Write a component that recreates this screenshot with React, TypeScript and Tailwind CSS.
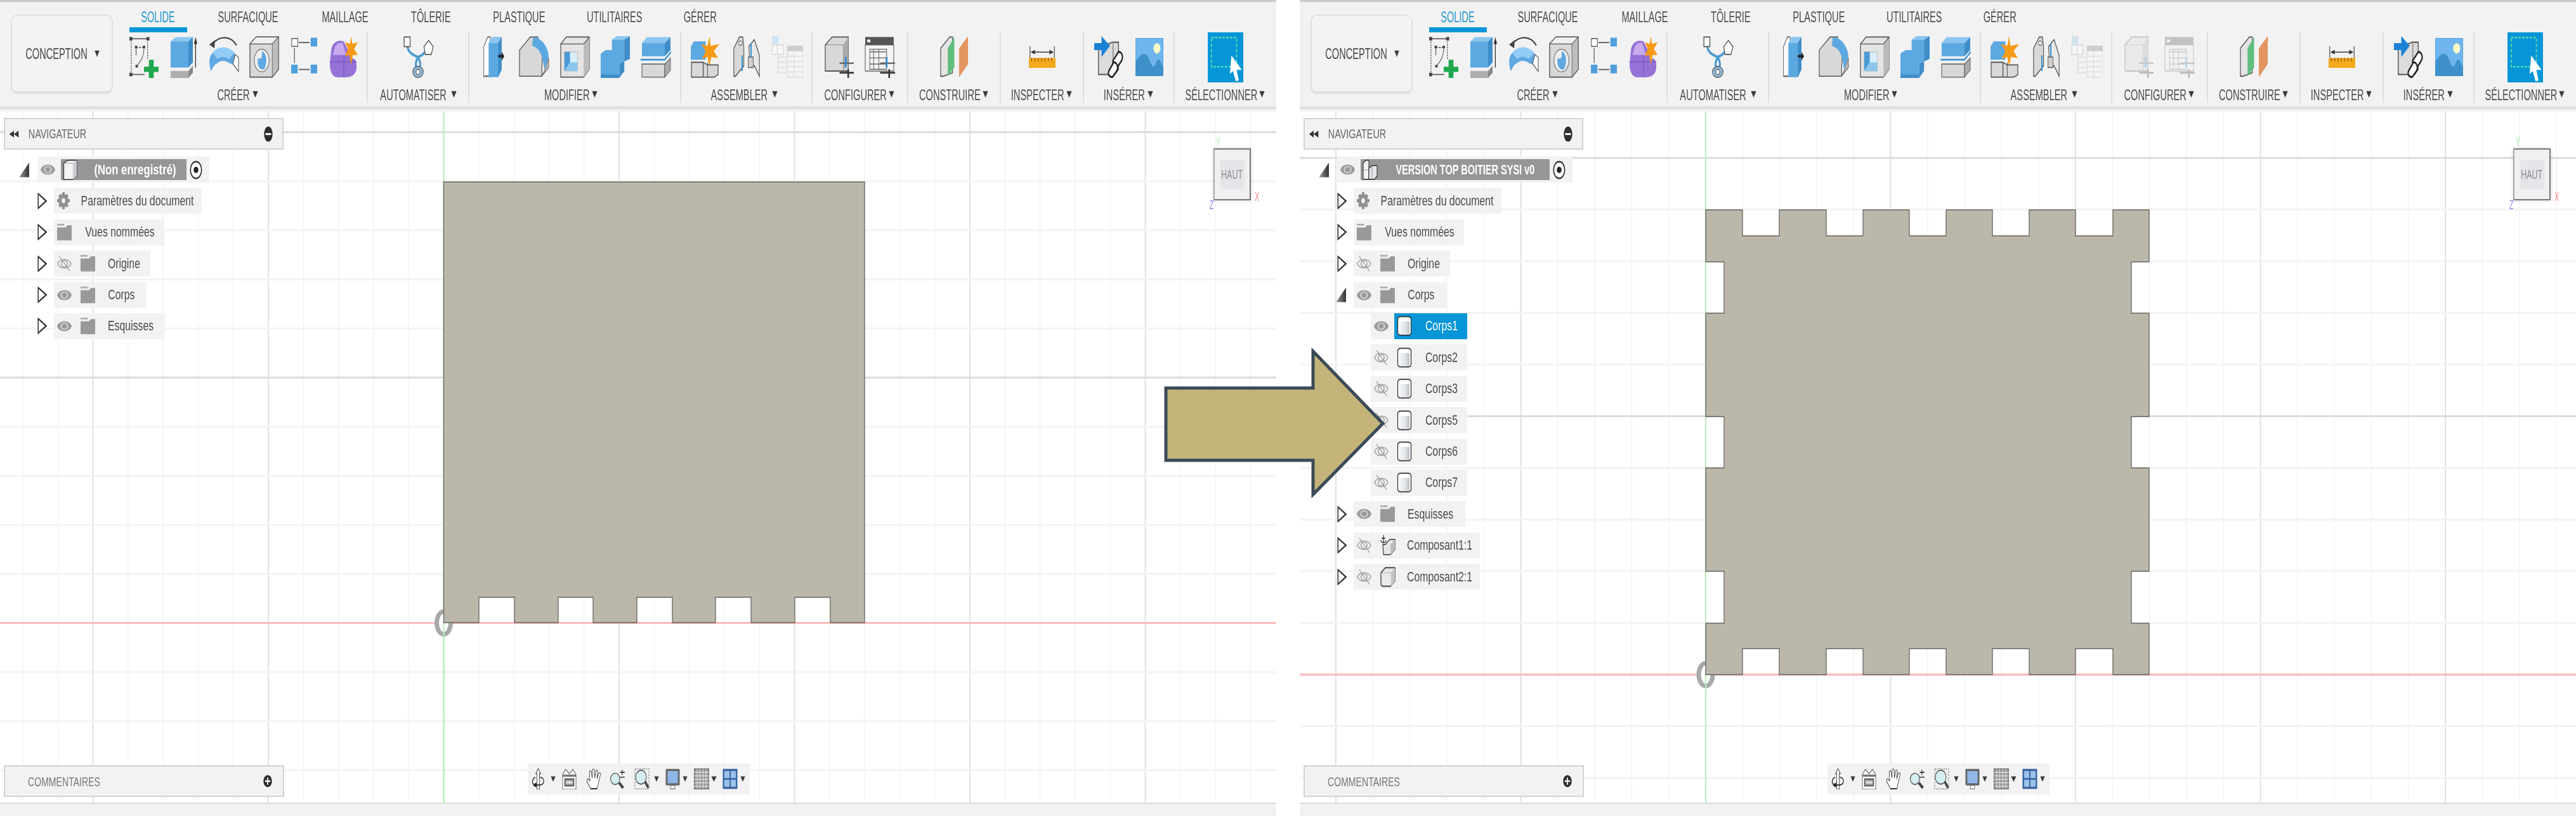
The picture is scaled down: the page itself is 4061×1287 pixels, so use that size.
import React from "react";

type C = { c: string; children?: React.ReactNode };
const I = ({ c, children }: C) => (
  <svg viewBox="0 0 48 48" preserveAspectRatio="none" className={`block shrink-0 ${c}`}>{children}</svg>
);
const Fit = ({ w, s, children }: { w: string; s: string; children: React.ReactNode }) => (
  <span className={`flex justify-center ${w}`}>
    <span className={`block shrink-0 whitespace-nowrap ${s}`}>{children}</span>
  </span>
);
const Tri = ({ c }: { c: string }) => (
  <I c={c}>
    <path d="M2 6H46L24 44Z" fill="#3a3a3a" />
  </I>
);

const O = "#555";
const Sketch = () => (
  <I c="w-[46px] h-[66px]">
    <g fill="none" stroke={O} strokeWidth="1.2">
      <path d="M3 3H30" />
      <path d="M3 3V44" strokeDasharray="2 1" />
      <path d="M3 44H25" />
      <path d="M30 3V26" strokeDasharray="2 1" />
      <path d="M11 13H24" strokeDasharray="3 2" />
      <path d="M11 14V22" />
      <path d="M24 14C24 24 18 30 12 34" strokeWidth="1" />
    </g>
    <g fill="#444">
      <rect x="0" y="1" width="5" height="4" />
      <rect x="28" y="1" width="5" height="4" />
      <rect x="0" y="42" width="5" height="4" />
      <rect x="9" y="11" width="4" height="3" />
      <rect x="22" y="11" width="4" height="3" />
      <rect x="10" y="33" width="4" height="3" />
    </g>
    <path d="M32 27H40V35H48V41H40V48H32V41H24V35H32Z" fill="#1fa84e" />
  </I>
);
const Extrude = () => (
  <I c="w-[42px] h-[66px]">
    <path d="M0 6L9 1H40L32 6Z" fill="#8cc6f0" />
    <path d="M0 6H32V36H0Z" fill="#5ca9e1" />
    <path d="M32 6L40 1V30L32 36Z" fill="#3f8dc8" />
    <path d="M0 38H32L40 32V34L32 40H0Z" fill="#eee" />
    <path d="M0 40H32V48H0Z" fill="#adadad" />
    <path d="M32 40L40 34V42L32 48Z" fill="#888" />
    <path d="M45 6V36" stroke="#333" strokeWidth="1.5" />
    <path d="M45 1L48 9H42Z" fill="#333" />
  </I>
);
const Revolve = () => (
  <I c="w-[48px] h-[58px]">
    <path d="M6 10C18 -1 34 -1 44 12" fill="none" stroke="#444" strokeWidth="2" />
    <path d="M1 11L10 5L9 16Z" fill="#444" />
    <path d="M2 28C8 12 36 12 42 24L46 28V46C40 38 38 36 34 36C24 30 18 32 12 36C8 38 6 42 4 46C2 42 0 34 2 28Z" fill="#5fa8e2" />
    <path d="M6 22C14 12 32 12 40 22L32 30C26 26 18 26 14 30Z" fill="#93cdf7" />
    <path d="M42 24L47 28V46L38 36Z" fill="#fff" stroke="#555" strokeWidth="1" />
  </I>
);
const Hole = () => (
  <I c="w-[47px] h-[66px]">
    <path d="M1 9L11 1H47V38L37 47H1Z" fill="#d8d8d8" stroke={O} strokeWidth="1.4" />
    <path d="M1 9L11 1H47L37 9Z" fill="#efefef" stroke={O} strokeWidth=".8" />
    <path d="M37 9V47L47 38V1Z" fill="#bdbdbd" stroke={O} strokeWidth=".8" />
    <ellipse cx="20" cy="28" rx="12" ry="13" fill="#eee" stroke="#666" strokeWidth="1" />
    <path d="M20 17C28 19 30 30 24 38C16 40 12 32 14 25C17 27 22 26 20 17Z" fill="#5fa8e2" />
  </I>
);
const Pattern = () => (
  <I c="w-[41px] h-[60px]">
    <rect x="1" y="3" width="11" height="10" fill="#fff" stroke="#555" strokeWidth="1.2" />
    <rect x="36" y="2" width="12" height="11" fill="#4f9fdc" />
    <rect x="0" y="36" width="12" height="11" fill="#4f9fdc" />
    <rect x="36" y="36" width="12" height="11" fill="#4f9fdc" />
    <path d="M14 8H34M6 15V34M14 42H34" stroke="#555" strokeWidth="1.4" fill="none" />
  </I>
);
const Form = () => (
  <I c="w-[46px] h-[65px]">
    <path d="M3 18C4 7 14 4 24 6L38 26C44 26 45 30 45 36C45 44 38 48 26 48H14C6 48 1 42 1 32Z" fill="#9472d6" />
    <path d="M8 16C10 9 16 7 22 8L28 22H6Z" fill="#c7a9ef" />
    <path d="M1 30H45M24 22V48" stroke="#7453b8" strokeWidth="1" />
    <path d="M36 0L38 9L47 7L41 15L47 22L39 22L36 33L33 22L26 23L31 15L26 7L34 9Z" fill="#f79a14" />
  </I>
);
const Automate = () => (
  <I c="w-[50px] h-[66px]">
    <path d="M8 12C10 20 18 22 24 24C30 22 34 20 38 14M24 24C20 30 20 34 22 36M24 24C28 30 28 34 26 36" fill="none" stroke="#4a9bd3" strokeWidth="3" />
    <rect x="3" y="1" width="9" height="11" fill="#fff" stroke="#555" strokeWidth="1.3" />
    <path d="M40 5L47 12L44 21H35L33 12Z" fill="#fff" stroke="#555" strokeWidth="1.2" />
    <ellipse cx="24" cy="41" rx="8" ry="6.5" fill="#8db8d6" stroke="#555" strokeWidth="1" />
    <ellipse cx="24" cy="41" rx="3" ry="3" fill="#fff" stroke="#555" strokeWidth="1" />
  </I>
);
const Press = () => (
  <I c="w-[33px] h-[66px]">
    <path d="M1 46V12L10 1H16V46Z" fill="#fff" stroke={O} strokeWidth="1.3" />
    <path d="M12 8L20 1H42V38L34 47H12Z" fill="#5ca9e1" />
    <path d="M34 8H12L20 1H42Z" fill="#8cc6f0" />
    <path d="M34 8V47L42 38V1Z" fill="#3f8dc8" />
    <path d="M34 23H44" stroke="#222" strokeWidth="3" />
    <path d="M42 18L48 23L42 28Z" fill="#222" />
  </I>
);
const Fillet = () => (
  <I c="w-[48px] h-[66px]">
    <path d="M1 46V16L18 1H30L30 9H36C39 16 36 30 36 46Z" fill="#d8d8d8" stroke={O} strokeWidth="1.2" />
    <path d="M36 46L47 36V25L40 40Z" fill="#bdbdbd" stroke={O} strokeWidth=".8" />
    <path d="M22 2C36 0 47 14 47 24L40 38C38 24 34 14 21 11Z" fill="#5ca9e1" />
  </I>
);
const Shell = () => (
  <I c="w-[47px] h-[66px]">
    <path d="M1 9L10 1H47V38L38 47H1Z" fill="#e4e4e4" stroke={O} strokeWidth="1.3" />
    <path d="M38 9V47L47 38V1Z" fill="#bbb" />
    <path d="M1 9H38L47 1" fill="none" stroke={O} strokeWidth="1" />
    <path d="M7 18V40H28V18Z" fill="#d8edfb" stroke="#b6b6b6" strokeWidth=".8" />
    <path d="M7 18H16V30L7 40Z" fill="#4b99d6" />
    <path d="M7 40L16 30H28V40Z" fill="#8cc6f0" />
  </I>
);
const Combine = () => (
  <I c="w-[47px] h-[66px]">
    <path d="M18 4L26 0H47L38 4Z" fill="#8cc6f0" />
    <path d="M0 20L8 16H18V4H38V29L30 31V48H0Z" fill="#5ca9e1" />
    <path d="M38 4L47 0V26L38 29Z M30 31L38 29V40L30 48Z" fill="#3f8dc8" />
    <path d="M0 48H30V44H0Z" fill="#3f8dc8" />
  </I>
);
const Split = () => (
  <I c="w-[48px] h-[66px]">
    <path d="M2 8L10 1H47L38 8Z" fill="#8cc6f0" />
    <path d="M2 8H38V23H2Z" fill="#5ca9e1" />
    <path d="M38 8L47 1V16L38 23Z" fill="#3f8dc8" />
    <path d="M0 27L38 27L48 18" fill="none" stroke="#3a93d6" strokeWidth="2" />
    <path d="M2 32H38V47H2Z" fill="#d8d8d8" stroke={O} strokeWidth="1" />
    <path d="M38 32L47 25V39L38 47Z" fill="#aaa" stroke={O} strokeWidth=".8" />
  </I>
);
const Asm = () => (
  <I c="w-[47px] h-[66px]">
    <path d="M0 12L5 6H24V27H0Z" fill="#5ca9e1" />
    <path d="M30 0L32 11L46 9L37 17L44 25L33 24L30 35L27 24L18 26L24 17L17 9L27 11Z" fill="#f79a14" />
    <path d="M1 30H20V47H1Z M20 47V30L27 33H44V44L38 47Z" fill="#d8d8d8" stroke={O} strokeWidth="1.3" />
    <path d="M20 30V47M27 30V47" stroke={O} strokeWidth="1" />
  </I>
);
const Joint = () => (
  <I c="w-[42px] h-[66px]">
    <path d="M1 46V14L11 1H17L19 12V34L4 46Z" fill="#d8d8d8" stroke={O} strokeWidth="1.3" />
    <path d="M28 12L38 4L47 22V46L38 34H30Z" fill="#e8e8e8" stroke={O} strokeWidth="1.3" />
    <path d="M27 24H36V36H27Z" fill="#cfcfcf" stroke={O} strokeWidth="1" />
    <path d="M16 22V40M32 8V24" stroke="#3a93d6" strokeWidth="2.4" />
    <ellipse cx="13" cy="8" rx="3" ry="2.5" fill="#fff" stroke={O} />
  </I>
);
const TableFaded = () => (
  <I c="w-[50px] h-[66px]">
    <g opacity=".9">
      <rect x="1" y="0" width="10" height="9" fill="#cfe1ef" />
      <rect x="1" y="10" width="17" height="11" fill="#f8f8f8" stroke="#ccc" />
      <path d="M9 10V21" stroke="#ccc" />
      <rect x="24" y="11" width="24" height="6" fill="#c8c8c8" />
      <path d="M24 17H48V47H24Z" fill="#f5f5f5" stroke="#d4d4d4" />
      <path d="M24 23H48M24 29H48M24 35H48M24 41H48M34 17V47" stroke="#d8d8d8" />
      <path d="M10 24H22M10 30H22M10 36H22M10 42H22M10 24V44" stroke="#dedede" strokeWidth="1.4" />
    </g>
  </I>
);
const Sliders = () => (
  <g>
    <path d="M24 31H47" stroke="#5a5a5a" strokeWidth="1.6" />
    <path d="M24 42H47" stroke="#333" strokeWidth="2" />
    <path d="M34 24V36" stroke="#2b87d3" strokeWidth="2.6" />
    <path d="M38 38V48" stroke="#333" strokeWidth="2.6" />
  </g>
);
const Cfg1 = () => (
  <I c="w-[47px] h-[66px]">
    <path d="M1 10L12 1H38V40H1Z" fill="#d8d8d8" stroke={O} strokeWidth="1.3" />
    <path d="M1 10H30V40" fill="none" stroke={O} strokeWidth=".5" />
    <path d="M30 10L38 1V30L30 40Z" fill="#aaa" />
    <Sliders />
  </I>
);
const Cfg2 = () => (
  <I c="w-[49px] h-[66px]">
    <rect x="1" y="1" width="44" height="9" fill="#555" />
    <rect x="4" y="4" width="5" height="3" fill="#fff" />
    <rect x="1" y="10" width="44" height="30" fill="#f4f4f4" stroke={O} />
    <path d="M8 18H34M8 25H34M8 32H34M14 15V38M22 15V38M8 15V38H34V15Z" fill="none" stroke="#666" strokeWidth="1" />
    <Sliders />
  </I>
);
const Plane = () => (
  <I c="w-[45px] h-[66px]">
    <path d="M1 46V14L16 1H21V42L5 46Z" fill="#e4e4e4" stroke={O} strokeWidth="1.3" />
    <path d="M13 46V14L24 1V36Z" fill="#5fbe7d" />
    <path d="M32 47V14L47 0V32Z" fill="#e39560" />
  </I>
);
const Inspect = () => (
  <I c="w-[42px] h-[34px]">
    <path d="M2 0V26M46 0V26" stroke="#666" strokeWidth="1.6" />
    <path d="M7 13H41" stroke="#333" strokeWidth="2" />
    <path d="M3 13L11 8V18ZM45 13L37 8V18Z" fill="#333" />
    <rect x="0" y="26" width="48" height="22" fill="#f5a91e" />
    <path d="M5 26V33M11 26V33M17 26V33M23 26V33M29 26V33M35 26V33M41 26V33" stroke="#8b5c05" strokeWidth="1.6" />
  </I>
);
const Insert = () => (
  <I c="w-[46px] h-[66px]">
    <path d="M7 14L30 7H40V38L34 44H7Z" fill="#dcdcdc" stroke={O} strokeWidth="1.5" />
    <path d="M31 7V40" stroke="#9a9a9a" strokeWidth="2" />
    <path d="M0 8H12V0L26 11L12 24V16H0Z" fill="#1c82d6" />
    <g fill="#fff" stroke="#222" strokeWidth="2.2">
      <path d="M31 28L40 18C46 18 48 24 45 28L38 36C33 36 30 33 31 28Z" />
      <path d="M24 40L32 30C38 30 40 36 37 40L30 47C25 47 22 44 24 40Z" />
    </g>
  </I>
);
const Picture = () => (
  <I c="w-[44px] h-[60px]">
    <rect x="0" y="0" width="48" height="48" fill="#6fb6ee" stroke="#4a93cc" strokeWidth="1" />
    <ellipse cx="37" cy="13" rx="6" ry="6.5" fill="#fffbc8" />
    <path d="M0 30C6 24 12 16 20 22C26 28 28 38 32 36C36 32 38 24 42 28L48 38V48H0Z" fill="#3e90c9" />
  </I>
);
const SelectI = () => (
  <I c="w-[56px] h-[79px]">
    <rect width="48" height="48" fill="#0696d7" />
    <rect x="5" y="5" width="34" height="28" fill="none" stroke="#61e0a8" strokeWidth="1.4" strokeDasharray="3 2" />
    <path d="M32 22L46 36L39 36L42 46L38 47L34 37L30 40Z" fill="#fff" />
  </I>
);

const EyeOn = () => (
  <I c="w-[23px] h-[21px]">
    <path d="M0 24C6 0 42 0 48 24C42 48 6 48 0 24Z" fill="#9a9a9a" />
    <ellipse cx="24" cy="24" rx="13" ry="14" fill="#d0d0d0" />
    <ellipse cx="24" cy="24" rx="8" ry="9" fill="#9a9a9a" />
  </I>
);
const EyeOff = () => (
  <I c="w-[23px] h-[24px]">
    <path d="M2 24C10 6 38 6 46 24C38 42 10 42 2 24Z" fill="none" stroke="#a4a4a4" strokeWidth="3.4" />
    <ellipse cx="24" cy="24" rx="10" ry="10" fill="none" stroke="#a4a4a4" strokeWidth="3.4" />
    <path d="M8 1L42 47" stroke="#8f8f8f" strokeWidth="2.5" />
  </I>
);
const Folder = () => (
  <I c="w-[23px] h-[27px]">
    <rect x="0" y="0" width="24" height="5" fill="#b0b0b0" />
    <path d="M0 10H28L34 4H48V48H0Z" fill="#999" />
    <rect x="0" y="46" width="48" height="2" fill="#ddd" />
  </I>
);
const Gear = () => (
  <I c="w-[20px] h-[27px]">
    <path d="M20 0H28L30 8L37 5L43 11L39 18L48 20V28L39 30L43 37L37 43L30 40L28 48H20L18 40L11 43L5 37L9 30L0 28V20L9 18L5 11L11 5L18 8Z" fill="#8f8f8f" />
    <ellipse cx="24" cy="24" rx="7" ry="7" fill="#f2f2f2" />
  </I>
);
const BodyI = () => (
  <I c="w-[24px] h-[32px]">
    <defs>
      <linearGradient id="bd" x1="0" x2="1" y1="0" y2="0">
        <stop offset="0" stopColor="#f7f7f7" />
        <stop offset=".6" stopColor="#dfe3e8" />
        <stop offset="1" stopColor="#b8bec6" />
      </linearGradient>
    </defs>
    <rect x="3" y="2" width="42" height="44" rx="9" ry="6" fill="#fff" stroke="#333" strokeWidth="2.5" />
    <rect x="8" y="13" width="32" height="30" rx="3" fill="url(#bd)" />
  </I>
);
const CompI = () => (
  <I c="w-[24px] h-[32px]">
    <path d="M2 14L16 2H46V34L32 46H6L2 42Z" fill="#e8e8e8" stroke="#333" strokeWidth="2.5" />
    <path d="M34 14V46L46 34V2Z" fill="#c4c4c4" />
    <path d="M2 14H34" fill="none" stroke="#888" strokeWidth="1" />
  </I>
);
const AnchorI = () => (
  <I c="w-[24px] h-[32px]">
    <path d="M8 22H16L30 10H46V34L32 46H10Z" fill="#e6e6e6" stroke="#333" strokeWidth="2.2" />
    <path d="M32 22V46L46 34V10Z" fill="#bdbdbd" />
    <path d="M10 0V18M4 7H16M2 12C3 20 17 20 18 12" fill="none" stroke="#222" strokeWidth="2.2" />
  </I>
);
const RootCube = () => (
  <I c="w-[24px] h-[32px]">
    <path d="M3 8L16 1H44V38L30 47H3Z" fill="#f2f3f5" stroke="#333" strokeWidth="2.4" />
    <path d="M32 8V47L44 38V1Z" fill="#c8ccd2" />
    <path d="M3 8H32" stroke="#666" strokeWidth="1" />
  </I>
);
const RootAsm = () => (
  <I c="w-[24px] h-[32px]">
    <path d="M2 8L10 1H20V46H2Z" fill="#f2f3f5" stroke="#333" strokeWidth="2.2" />
    <path d="M20 20L30 14H46V38L38 46H20Z" fill="#e4e6ea" stroke="#333" strokeWidth="2.2" />
    <path d="M2 24H20M30 14V46" stroke="#555" strokeWidth="1" />
  </I>
);
const Chevron = () => (
  <I c="w-[15px] h-[26px]">
    <path d="M4 3L44 24L4 45Z" fill="#fff" stroke="#333" strokeWidth="5" />
  </I>
);
const Open = () => (
  <I c="w-[17px] h-[24px]">
    <defs>
      <linearGradient id="tr" x1="0" x2="1" y1="0" y2="0">
        <stop offset="0" stopColor="#999" />
        <stop offset="1" stopColor="#333" />
      </linearGradient>
    </defs>
    <path d="M45 1V47H1Z" fill="url(#tr)" />
  </I>
);
const Target = () => (
  <I c="w-[20px] h-[30px]">
    <ellipse cx="24" cy="24" rx="21" ry="21" fill="#fff" stroke="#333" strokeWidth="4" />
    <ellipse cx="24" cy="24" rx="9" ry="8" fill="#222" />
  </I>
);

const Orbit = () => (
  <I c="w-[23px] h-[33px]">
    <path d="M24 0L32 12H28V48H20V12H16Z" fill="#fff" stroke="#222" strokeWidth="1.6" />
    <path d="M14 20C4 24 2 34 10 36M30 20C46 22 46 36 30 38H16" fill="none" stroke="#222" strokeWidth="2.4" />
    <path d="M18 32L6 38L18 44Z" fill="#222" />
  </I>
);
const Camera = () => (
  <I c="w-[23px] h-[33px]">
    <path d="M2 14L12 2L24 12L36 2L46 14V48H2Z" fill="#fff" stroke="#444" strokeWidth="1.6" />
    <path d="M2 14H46V19H2Z" fill="#777" />
    <rect x="9" y="24" width="30" height="16" fill="#999" stroke="#333" strokeWidth="2" />
    <rect x="14" y="29" width="20" height="6" fill="#ddd" />
  </I>
);
const Hand = () => (
  <I c="w-[24px] h-[33px]">
    <path d="M14 46C8 36 0 30 3 25C6 21 10 26 12 30L11 9C11 4 16 4 17 9L19 22L20 4C20 0 26 0 26 4L27 22L31 6C32 2 37 3 36 8L34 24L39 12C41 8 46 10 45 14L38 36C37 40 36 43 35 46Z" fill="#fff" stroke="#333" strokeWidth="1.6" />
    <path d="M14 47H35" stroke="#333" strokeWidth="2" />
  </I>
);
const Zoom = () => (
  <I c="w-[25px] h-[33px]">
    <ellipse cx="17" cy="24" rx="14" ry="13" fill="#d5eef2" stroke="#444" strokeWidth="2" />
    <path d="M26 35L38 47L44 43L32 31Z" fill="#444" />
    <path d="M38 3V15M32 9H46M32 20H46" stroke="#333" strokeWidth="2.4" />
  </I>
);
const FitI = () => (
  <I c="w-[24px] h-[33px]">
    <rect x="2" y="1" width="44" height="46" fill="none" stroke="#555" strokeWidth="1.6" strokeDasharray="4 3" />
    <ellipse cx="21" cy="20" rx="17" ry="16" fill="#d5eef2" stroke="#444" strokeWidth="2" />
    <path d="M31 32L41 46L47 42L36 28Z" fill="#444" />
  </I>
);
const Display = () => (
  <I c="w-[23px] h-[33px]">
    <rect x="1" y="1" width="46" height="38" rx="3" fill="#666" />
    <rect x="7" y="6" width="34" height="28" fill="#8eb7e6" />
    <path d="M17 39H31V47H17Z" fill="#fff" stroke="#555" strokeWidth="1.6" />
  </I>
);
const GridI = () => (
  <I c="w-[24px] h-[33px]">
    <rect x="1" y="1" width="46" height="46" fill="#999" stroke="#555" strokeWidth="1.6" />
    <path d="M10 1V47M19 1V47M29 1V47M38 1V47M1 9H47M1 17H47M1 25H47M1 33H47M1 41H47" stroke="#f2f2f2" strokeWidth="1.6" />
  </I>
);
const Views = () => (
  <I c="w-[24px] h-[33px]">
    <rect x="1" y="1" width="46" height="46" fill="#3a66a3" />
    <rect x="6" y="6" width="16" height="16" fill="#9cc1e8" />
    <rect x="26" y="6" width="16" height="16" fill="#9cc1e8" />
    <rect x="6" y="26" width="16" height="16" fill="#9cc1e8" />
    <rect x="26" y="26" width="16" height="16" fill="#9cc1e8" />
  </I>
);

const Tx = ({ w, children, s = "scale-x-[.72]", c = "text-[#4a4a4a]" }: { w: string; children: React.ReactNode; s?: string; c?: string }) => (
  <span className={`block text-[22px] leading-none ${c}`}>
    <Fit w={w} s={s}>{children}</Fit>
  </span>
);

const tabs = [
  ["SOLIDE", "w-[55px]"],
  ["SURFACIQUE", "w-[95px]"],
  ["MAILLAGE", "w-[76px]"],
  ["TÔLERIE", "w-[61px]"],
  ["PLASTIQUE", "w-[82px]"],
  ["UTILITAIRES", "w-[85px]"],
  ["GÉRER", "w-[51px]"],
];

const Group = ({ w, label, lw, children, lp = "", sep = true }: { w: string; label: string; lw: string; children: React.ReactNode; lp?: string; sep?: boolean }) => (
  <div className={`flex flex-col items-center h-[111px] shrink-0 ${w} ${sep ? "border-r-2 border-[#dedede]" : ""}`}>
    <div className="flex items-center justify-center h-[78px]">{children}</div>
    <div className={`flex items-center gap-[5px] h-[22px] mt-[10px] text-[24px] leading-none text-[#4a4a4a] ${lp}`}>
      <Fit w={lw} s="scale-x-[.61]">{label}</Fit>
      <Tri c="w-[9px] h-[13px] -mt-[3px]" />
    </div>
  </div>
);
const Cell = ({ children, w = "w-[63px]" }: { children: React.ReactNode; w?: string }) => (
  <div className={`flex justify-center ${w}`}>{children}</div>
);

const Toolbar = ({ disabled }: { disabled?: boolean }) => (
  <div className="shrink-0 h-[176px] bg-[#f2f2f2]">
    <div className="h-[172px] border-t-[3px] border-b-4 border-t-[#c9c9c9] border-b-[#dedede] flex">
      <div className="ml-[17px] mt-[20px] w-[161px] h-[125px] shrink-0 rounded-[10px] border-2 border-b-4 border-[#e0e0e0] bg-[#f3f3f3] flex items-center justify-center gap-[9px] text-[24px] leading-none text-[#444]">
        <Fit w="w-[101px]" s="scale-x-[.61]">CONCEPTION</Fit>
        <Tri c="w-[8px] h-[13px]" />
      </div>
      <div className="flex flex-col">
        <div className="flex h-[48px] ml-[44px] gap-[67px] text-[24px] leading-none text-[#4a4a4a]">
          {tabs.map(([t, w], i) => (
            <div
              key={t}
              className={`flex items-start pt-[12px] h-[48px] ${i === 0 ? "-mx-[18px] px-[18px] border-b-8 border-[#0696d7] text-[#1f96cf]" : ""}`}
            >
              <Fit w={w} s="scale-x-[.61]">{t}</Fit>
            </div>
          ))}
        </div>
        <div className="flex">
          <Group w="w-[402px]" label="CRÉER" lw="w-[50px]" lp="pr-[7px]">
            <div className="flex pl-[13px]">
              <Cell><Sketch /></Cell>
              <Cell><Extrude /></Cell>
              <Cell><Revolve /></Cell>
              <Cell><Hole /></Cell>
              <Cell><Pattern /></Cell>
              <Cell><Form /></Cell>
            </div>
          </Group>
          <Group w="w-[160px]" label="AUTOMATISER" lw="w-[107px]"><Automate /></Group>
          <Group w="w-[334px]" label="MODIFIER" lw="w-[68px]" lp="pr-[10px]">
            <Cell w="w-[64px]"><Press /></Cell>
            <Cell w="w-[64px]"><Fillet /></Cell>
            <Cell w="w-[64px]"><Shell /></Cell>
            <Cell w="w-[64px]"><Combine /></Cell>
            <Cell w="w-[64px]"><Split /></Cell>
          </Group>
          <Group w="w-[207px]" label="ASSEMBLER" lw="w-[92px]" lp="pr-[8px]">
            <Cell w="w-[64px]"><Asm /></Cell>
            <Cell w="w-[64px]"><Joint /></Cell>
            <Cell w="w-[64px]"><TableFaded /></Cell>
          </Group>
          <Group w="w-[151px]" label="CONFIGURER" lw="w-[95px]">
            <div className={`flex ${disabled ? "opacity-30" : ""}`}>
              <Cell w="w-[64px]"><Cfg1 /></Cell>
              <Cell w="w-[64px]"><Cfg2 /></Cell>
            </div>
          </Group>
          <Group w="w-[146px]" label="CONSTRUIRE" lw="w-[94px]"><Plane /></Group>
          <Group w="w-[131px]" label="INSPECTER" lw="w-[80px]"><Inspect /></Group>
          <Group w="w-[143px]" label="INSÉRER" lw="w-[62px]">
            <Cell w="w-[64px]"><Insert /></Cell>
            <Cell w="w-[64px]"><Picture /></Cell>
          </Group>
          <Group w="w-[160px]" label="SÉLECTIONNER" lw="w-[110px]" sep={false}><SelectI /></Group>
        </div>
      </div>
    </div>
  </div>
);

const range = (from: number, to: number, step: number) => {
  const out: number[] = [];
  const start = from + Math.ceil((0 - from) / step) * step;
  for (let v = start; v <= to; v += step) out.push(v);
  return out;
};

type Scene = { ox: number; oy: number; gx: number; gy: number; body: string };

const Canvas = ({ ox, oy, gx, gy, body }: Scene) => (
  <svg viewBox="0 176 2012 1090" preserveAspectRatio="none" className="absolute inset-0 w-full h-full">
    {range(ox, 2012, gx).map((x) => {
      const k = Math.round((x - ox) / gx);
      const major = k % 5 === 0;
      return <line key={x} x1={x} x2={x} y1="176" y2="1266" stroke={major ? "#dadada" : "#f0f0f0"} strokeWidth={major ? 1.6 : 1.2} />;
    })}
    {range(oy, 1266, gy).map((y) => {
      const k = Math.round((y - oy) / gy);
      const major = k % 5 === 0;
      return <line key={y} x1="0" x2="2012" y1={y} y2={y} stroke={major ? "#dcdcdc" : "#f3f3f3"} strokeWidth="3" />;
    })}
    <line x1={ox} x2={ox} y1="176" y2="1266" stroke="#b7f0b7" strokeWidth="2" />
    <line x1="0" x2="2012" y1={oy} y2={oy} stroke="#ffb9b9" strokeWidth="3" />
    <ellipse cx={ox} cy={oy} rx="11" ry="18" fill="#fff" stroke="#a8a8a8" strokeWidth="7" />
    <line x1={ox} x2={ox} y1={oy} y2="1266" stroke="#b7f0b7" strokeWidth="2" />
    <path d={body} fill="#bbb7ab" stroke="#66665e" strokeWidth="1.3" />
  </svg>
);

const Navigator = () => (
  <div className="absolute left-[6px] top-[10px] w-[441px] h-[50px] bg-[#f2f2f2] border-2 border-[#d2d2d2] flex items-center pl-[6px] pr-[15px] text-[20px] leading-none text-[#666]">
    <I c="w-[16px] h-[13px]">
      <path d="M24 4V44L2 24ZM46 4V44L24 24Z" fill="#333" />
    </I>
    <div className="ml-[13px]">
      <Fit w="w-[96px]" s="scale-x-[.72]">NAVIGATEUR</Fit>
    </div>
    <div className="ml-auto">
      <I c="w-[14px] h-[25px]">
        <ellipse cx="24" cy="24" rx="23" ry="23" fill="#2f2f2f" />
        <rect x="9" y="21" width="30" height="6" fill="#fff" />
      </I>
    </div>
  </div>
);

const Comments = () => (
  <div className="absolute left-[6px] bottom-[9px] w-[442px] h-[50px] bg-[#f2f2f2] border-2 border-[#d2d2d2] flex items-center pl-[35px] pr-[17px] text-[21px] leading-none text-[#777]">
    <Fit w="w-[116px]" s="scale-x-[.67]">COMMENTAIRES</Fit>
    <div className="ml-auto">
      <I c="w-[14px] h-[20px]">
        <ellipse cx="24" cy="24" rx="23" ry="23" fill="#2f2f2f" />
        <path d="M10 21H21V10H27V21H38V27H27V38H21V27H10Z" fill="#fff" />
      </I>
    </div>
  </div>
);

const NavBar = () => (
  <div className="absolute left-[832px] bottom-[13px] w-[350px] h-[49px] bg-[#f2f2f2] flex items-center pl-[5px]">
    <Orbit />
    <Tri c="w-[8px] h-[11px] ml-[8px]" />
    <div className="ml-[10px]"><Camera /></div>
    <div className="ml-[15px]"><Hand /></div>
    <div className="ml-[13px]"><Zoom /></div>
    <div className="ml-[14px]"><FitI /></div>
    <Tri c="w-[8px] h-[11px] ml-[7px]" />
    <div className="ml-[10px]"><Display /></div>
    <Tri c="w-[8px] h-[11px] ml-[4px]" />
    <div className="ml-[10px]"><GridI /></div>
    <Tri c="w-[9px] h-[11px] ml-[3px]" />
    <div className="ml-[9px]"><Views /></div>
    <Tri c="w-[8px] h-[11px] ml-[4px]" />
  </div>
);

const ViewCube = () => (
  <>
    <div className="absolute left-[1913px] top-[58px] w-[59px] h-[82px] bg-[#f0f0f0] border-2 border-[#777] border-l-[#aaa] shadow-[0_0_5px_rgba(0,0,0,.2)] flex items-center justify-center">
      <div className="w-[38px] h-[46px] bg-[#e6e6ea] flex items-center justify-center text-[20px] leading-none text-[#8a8a8a]">
        <Fit w="w-[36px]" s="scale-x-[.62]">HAUT</Fit>
      </div>
    </div>
    <span className="absolute left-[1914px] top-[37px] block scale-x-[.5] text-[20px] leading-none text-[#a6eea6]">Y</span>
    <span className="absolute left-[1975px] top-[124px] block scale-x-[.55] text-[20px] leading-none text-[#f48b8b]">X</span>
    <span className="absolute left-[1904px] top-[137px] block scale-x-[.55] text-[20px] leading-none text-[#8f8fe8]">Z</span>
  </>
);

const RowBox = ({ children, w }: { children: React.ReactNode; w: string }) => (
  <div className={`flex items-center h-[41px] bg-[#f2f2f2] pl-[5px] ${w}`}>{children}</div>
);

const Row1 = ({ open, children, w }: { open?: boolean; children: React.ReactNode; w: string }) => (
  <div className="flex items-center h-[41px] pl-[57px]">
    <div className="w-[28px] pl-[2px]">{open ? <div className="-ml-[2px]"><Open /></div> : <Chevron />}</div>
    <RowBox w={w}>{children}</RowBox>
  </div>
);

const Named = ({ eye, icon, label, tw, w, open }: { eye: "on" | "off"; icon: React.ReactNode; label: string; tw: string; w: string; open?: boolean }) => (
  <Row1 w={w} open={open}>
    {eye === "on" ? <EyeOn /> : <EyeOff />}
    <div className="ml-[14px]">{icon}</div>
    <div className="ml-[20px]"><Tx w={tw}>{label}</Tx></div>
  </Row1>
);

const Root = ({ icon, label, boxW, tw, pad, s }: { icon: React.ReactNode; label: string; boxW: string; tw: string; pad: string; s: string }) => (
  <div className="flex items-center h-[41px] pl-[30px]">
    <div className="w-[29px]"><Open /></div>
    <div className={`flex items-center h-[41px] bg-[#f2f2f2] pl-[5px] ${boxW}`}>
      <EyeOn />
      <div className={`flex items-center ml-[9px] h-[33px] bg-[#969696] ${pad}`}>
        <div className="ml-[3px]">{icon}</div>
        <Tx w={tw} s={s} c="text-white font-bold ml-auto">{label}</Tx>
      </div>
      <div className="ml-[5px]"><Target /></div>
    </div>
  </div>
);

const Common = () => (
  <>
    <Row1 w="w-[233px]">
      <Gear />
      <div className="ml-[18px]"><Tx w="w-[177px]">Paramètres du document</Tx></div>
    </Row1>
    <Row1 w="w-[174px]">
      <Folder />
      <div className="ml-[21px]"><Tx w="w-[110px]">Vues nommées</Tx></div>
    </Row1>
    <Named eye="off" icon={<Folder />} label="Origine" tw="w-[50px]" w="w-[152px]" />
  </>
);

const LeftTree = () => (
  <div className="absolute left-0 top-[71px] flex flex-col gap-[8.4px]">
    <Root icon={<RootCube />} label="(Non enregistré)" boxW="w-[271px]" tw="w-[133px]" pad="w-[198px] pr-[15px] gap-[23px]" s="scale-x-[.76]" />
    <Common />
    <Named eye="on" icon={<Folder />} label="Corps" tw="w-[43px]" w="w-[146px]" />
    <Named eye="on" icon={<Folder />} label="Esquisses" tw="w-[73px]" w="w-[175px]" />
  </div>
);

const Level2 = ({ label, active }: { label: string; active?: boolean }) => (
  <div className="flex items-center h-[41px] ml-[112px] w-[152px] bg-[#f2f2f2] pl-[5px]">
    {active ? <EyeOn /> : <EyeOff />}
    <div className={`flex items-center ml-[9px] h-[41px] flex-1 pl-[4px] ${active ? "bg-[#0696d7]" : ""}`}>
      <BodyI />
      <div className="ml-[21px]">
        <Tx w="w-[50px]" c={active ? "text-white" : "text-[#4a4a4a]"}>{label}</Tx>
      </div>
    </div>
  </div>
);

const RightTree = () => (
  <div className="absolute left-0 top-[71px] flex flex-col gap-[8.4px]">
    <Root icon={<RootAsm />} label="VERSION TOP BOITIER SYSI v0" boxW="w-[371px]" tw="w-[231px]" pad="w-[298px] pr-[18px] gap-[22px]" s="scale-x-[.66]" />
    <Common />
    <Named open eye="on" icon={<Folder />} label="Corps" tw="w-[43px]" w="w-[146px]" />
    <Level2 active label="Corps1" />
    <Level2 label="Corps2" />
    <Level2 label="Corps3" />
    <Level2 label="Corps5" />
    <Level2 label="Corps6" />
    <Level2 label="Corps7" />
    <Named eye="on" icon={<Folder />} label="Esquisses" tw="w-[73px]" w="w-[176px]" />
    <Named eye="off" icon={<AnchorI />} label="Composant1:1" tw="w-[100px]" w="w-[199px]" />
    <Named eye="off" icon={<CompI />} label="Composant2:1" tw="w-[100px]" w="w-[199px]" />
  </div>
);

const bodyL =
  "M699.5 287H1363V982H1309V942H1253V982H1184V942H1128V982H1060V942H1004V982H935V942H880V982H811V942H755V982H699.5Z";
const bodyR =
  "M640 331H698V372H756V331H830V372H888V331H961V372H1019V331H1092V372H1150V331H1223V372H1282V331H1339V413H1311V494H1339V657H1311V738H1339V901H1311V983H1339V1064H1282V1023H1223V1064H1150V1023H1092V1064H1019V1023H961V1064H888V1023H830V1064H756V1023H698V1064H640V983H669V901H640V738H669V657H640V494H669V413H640Z";

const Panel = ({ scene, tree, disabled }: { scene: Scene; tree: React.ReactNode; disabled?: boolean }) => (
  <div className="w-[2012px] h-full shrink-0 flex flex-col">
    <Toolbar disabled={disabled} />
    <div className="relative flex-1 overflow-hidden bg-white">
      <Canvas {...scene} />
      <Navigator />
      {tree}
      <ViewCube />
      <Comments />
      <NavBar />
    </div>
    <div className="h-[21px] shrink-0 bg-[#f2f2f2] border-t-2 border-[#dddddd]" />
  </div>
);

export default function App() {
  return (
    <div className="relative flex w-[4061px] h-[1287px] overflow-hidden bg-white blur-[0.5px] font-['Liberation_Sans',Arial,sans-serif]">
      <Panel scene={{ ox: 699.5, oy: 982.5, gx: 55.3, gy: 77.4, body: bodyL }} tree={<LeftTree />} />
      <div className="w-[37px] shrink-0" />
      <Panel disabled scene={{ ox: 640, oy: 1064, gx: 58.3, gy: 81.5, body: bodyR }} tree={<RightTree />} />
      <svg viewBox="0 0 352 240" className="absolute left-[1834px] top-[548px] w-[352px] h-[240px]">
        <path d="M4 64H236V6L346 120L236 232V178H4Z" fill="#c4b47a" stroke="#3b4a57" strokeWidth="5" />
      </svg>
    </div>
  );
}
